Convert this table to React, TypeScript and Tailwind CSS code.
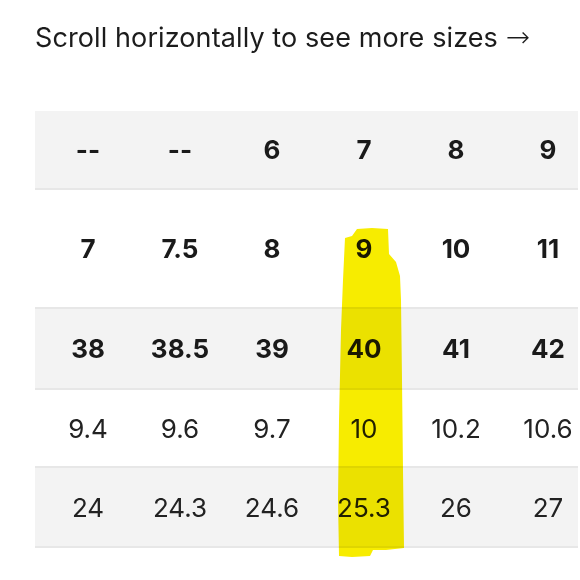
const rows = [
  { cells: ["--", "--", "6", "7", "8", "9"], bold: true, gray: true, h: "h-[79px]" },
  { cells: ["7", "7.5", "8", "9", "10", "11"], bold: true, gray: false, h: "h-[119px]" },
  { cells: ["38", "38.5", "39", "40", "41", "42"], bold: true, gray: true, h: "h-[81px]" },
  { cells: ["9.4", "9.6", "9.7", "10", "10.2", "10.6"], bold: false, gray: false, h: "h-[78px]" },
  { cells: ["24", "24.3", "24.6", "25.3", "26", "27"], bold: false, gray: true, h: "h-[80px]" },
];

function Highlight() {
  // marker stroke drawn over the "7" column
  return (
    <svg
      className="pointer-events-none absolute left-0 top-0 mix-blend-multiply"
      width="580"
      height="580"
      viewBox="0 0 580 580"
    >
      <path
        d="M345 238 L352 236 L357 229 L372 228 L388 229 L389 254 L396 262 L400 276 L401 300 L402 380 L403 470 L404 548 L386 550 L373 550 L370 556 L352 557 L339 556 L338 500 L339 420 L341 330 L343 280 Z"
        fill="#f7ec00"
      />
    </svg>
  );
}

export default function App() {
  return (
    <div
      className="relative w-[580px] h-[580px] overflow-hidden bg-white text-[#1c1c1c]"
      style={{ fontFamily: "Inter, 'Noto Sans', sans-serif" }}
    >
      <div className="pl-[35px] pt-[17px]">
        <p className="text-[27px] leading-[40px] tracking-[0.1px]">
          Scroll horizontally to see more sizes{" "}
          <span className="font-['DejaVu_Sans',sans-serif] text-[29px] font-light">→</span>
        </p>
      </div>

      <div className="ml-[35px] mt-[53px] w-[543px]">
        {rows.map((row, i) => (
          <div
            key={i}
            className={`flex items-center pl-[7px] border-b-2 border-[#e7e7e7] ${row.h} ${
              row.gray ? "bg-[#f3f3f3]" : "bg-white"
            }`}
          >
            {row.cells.map((c, j) => (
              <div
                key={j}
                className={`w-[92px] shrink-0 text-center text-[26px] ${
                  row.bold ? "font-bold text-[#1a1a1a]" : "font-normal text-[#222]"
                }`}
              >
                {c}
              </div>
            ))}
          </div>
        ))}
      </div>

      <Highlight />
    </div>
  );
}
